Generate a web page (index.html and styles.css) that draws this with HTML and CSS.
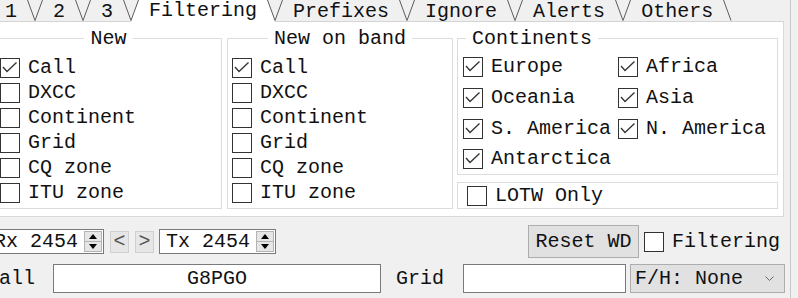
FILE: index.html
```html
<!DOCTYPE html>
<html>
<head>
<meta charset="utf-8">
<title>Filtering</title>
<link rel="stylesheet" href="styles.css">
</head>
<body>
<div class="window">
  <div class="main">

    <!-- tab strip -->
    <div class="tabs">
      <svg class="sep" width="16" height="22" viewBox="0 0 16 22"><path class="v" d="M0.5 0L8 20.5L15.5 0"/><path class="base" d="M0 21.5H16"/></svg>
      <span class="tab">1</span>
      <svg class="sep" width="16" height="22" viewBox="0 0 16 22"><path class="v" d="M0.5 0L8 20.5L15.5 0"/><path class="base" d="M0 21.5H16"/></svg>
      <span class="tab">2</span>
      <svg class="sep" width="16" height="22" viewBox="0 0 16 22"><path class="v" d="M0.5 0L8 20.5L15.5 0"/><path class="base" d="M0 21.5H16"/></svg>
      <span class="tab">3</span>
      <svg class="sep" width="16" height="22" viewBox="0 0 16 22"><path class="fill" d="M8 20.5L15.5 0H16V22H8Z"/><path class="v" d="M0.5 0L8 20.5L15.5 0"/><path class="base" d="M0 21.5H8"/></svg>
      <span class="tab on">Filtering</span>
      <svg class="sep" width="16" height="22" viewBox="0 0 16 22"><path class="fill" d="M0 0H0.5L8 20.5V22H0Z"/><path class="v" d="M0.5 0L8 20.5L15.5 0"/><path class="base" d="M8 21.5H16"/></svg>
      <span class="tab">Prefixes</span>
      <svg class="sep" width="16" height="22" viewBox="0 0 16 22"><path class="v" d="M0.5 0L8 20.5L15.5 0"/><path class="base" d="M0 21.5H16"/></svg>
      <span class="tab">Ignore</span>
      <svg class="sep" width="16" height="22" viewBox="0 0 16 22"><path class="v" d="M0.5 0L8 20.5L15.5 0"/><path class="base" d="M0 21.5H16"/></svg>
      <span class="tab">Alerts</span>
      <svg class="sep" width="16" height="22" viewBox="0 0 16 22"><path class="v" d="M0.5 0L8 20.5L15.5 0"/><path class="base" d="M0 21.5H16"/></svg>
      <span class="tab">Others</span>
      <svg class="sep" width="16" height="22" viewBox="0 0 16 22"><path class="v" d="M0.5 0L8 20.5"/><path class="base" d="M0 21.5H16"/></svg>
      <span class="tabfill"></span>
    </div>

    <!-- filtering page -->
    <div class="panel">
      <fieldset class="group left">
        <legend>New</legend>
        <div class="list">
          <label class="chk"><span class="box"><svg viewBox="0 0 18 18"><path d="M2 8L6 12.5L15.5 3.5"/></svg></span>Call</label>
          <label class="chk"><span class="box"></span>DXCC</label>
          <label class="chk"><span class="box"></span>Continent</label>
          <label class="chk"><span class="box"></span>Grid</label>
          <label class="chk"><span class="box"></span>CQ zone</label>
          <label class="chk"><span class="box"></span>ITU zone</label>
        </div>
      </fieldset>

      <fieldset class="group band">
        <legend>New on band</legend>
        <div class="list">
          <label class="chk"><span class="box"><svg viewBox="0 0 18 18"><path d="M2 8L6 12.5L15.5 3.5"/></svg></span>Call</label>
          <label class="chk"><span class="box"></span>DXCC</label>
          <label class="chk"><span class="box"></span>Continent</label>
          <label class="chk"><span class="box"></span>Grid</label>
          <label class="chk"><span class="box"></span>CQ zone</label>
          <label class="chk"><span class="box"></span>ITU zone</label>
        </div>
      </fieldset>

      <div class="rightcol">
        <fieldset class="group continents">
          <legend>Continents</legend>
          <div class="cgrid">
            <label class="chk"><span class="box"><svg viewBox="0 0 18 18"><path d="M2 8L6 12.5L15.5 3.5"/></svg></span>Europe</label>
            <label class="chk"><span class="box"><svg viewBox="0 0 18 18"><path d="M2 8L6 12.5L15.5 3.5"/></svg></span>Africa</label>
            <label class="chk"><span class="box"><svg viewBox="0 0 18 18"><path d="M2 8L6 12.5L15.5 3.5"/></svg></span>Oceania</label>
            <label class="chk"><span class="box"><svg viewBox="0 0 18 18"><path d="M2 8L6 12.5L15.5 3.5"/></svg></span>Asia</label>
            <label class="chk"><span class="box"><svg viewBox="0 0 18 18"><path d="M2 8L6 12.5L15.5 3.5"/></svg></span>S. America</label>
            <label class="chk"><span class="box"><svg viewBox="0 0 18 18"><path d="M2 8L6 12.5L15.5 3.5"/></svg></span>N. America</label>
            <label class="chk"><span class="box"><svg viewBox="0 0 18 18"><path d="M2 8L6 12.5L15.5 3.5"/></svg></span>Antarctica</label>
          </div>
        </fieldset>
        <div class="frame">
          <label class="chk"><span class="box"></span>LOTW Only</label>
        </div>
      </div>
    </div>

    <!-- bottom controls -->
    <div class="controls">
      <div class="row top">
        <div class="spinbox rx">Rx 2454<span class="spin"><span class="up"></span><span class="dn"></span></span></div>
        <span class="btn nav first">&lt;</span>
        <span class="btn nav">&gt;</span>
        <div class="spinbox tx">Tx 2454<span class="spin"><span class="up"></span><span class="dn"></span></span></div>
        <span class="btn reset">Reset WD</span>
        <label class="chk filt"><span class="box"></span>Filtering</label>
      </div>
      <div class="row bottom">
        <span class="lbl call">Call</span>
        <span class="field callfield">G8PGO</span>
        <span class="lbl grid">Grid</span>
        <span class="field gridfield"></span>
        <span class="combo">F/H: None<svg width="9" height="6" viewBox="0 0 9 6"><path d="M0.5 0.5L4.5 4.5L8.5 0.5"/></svg></span>
      </div>
    </div>

  </div>
  <div class="divider"></div>
  <div class="rest"></div>
</div>
</body>
</html>
```

FILE: styles.css
```css
body {
  margin: 0;
  width: 798px;
  height: 298px;
  overflow: hidden;
  background-color: #f0f0f0;
  color: #111;
  font-family: "Liberation Mono", "Courier New", monospace;
  font-size: 20px;
}

.window {
  display: flex;
  height: 298px;
}

.main {
  width: 790px;
  flex: none;
}

.divider {
  width: 1px;
  background-color: #c9c9c9;
}

.rest {
  flex: 1;
}

/* tabs */
.tabs {
  display: flex;
  width: 805px;
  margin-left: -21px;
}

.tab {
  height: 22px;
  box-sizing: border-box;
  padding: 2px 10px 0;
  line-height: 19px;
  white-space: nowrap;
  border-bottom: 1px solid #d4d4d4;
}

.tab.on {
  padding-top: 0;
  line-height: 21px;
  background-color: #fff;
  border-bottom-color: #fff;
}

.tabfill {
  flex: 1;
  border-bottom: 1px solid #d4d4d4;
}

.sep {
  display: block;
  flex: none;
}

.sep .v {
  fill: none;
  stroke: #5c5c5c;
  stroke-width: 1;
}

.sep .base {
  stroke: #d4d4d4;
  stroke-width: 1;
}

.sep .fill {
  fill: #fff;
}

/* page */
.panel {
  display: flex;
  width: 804px;
  height: 195px;
  box-sizing: border-box;
  margin-left: -20px;
  padding: 4px 5px 7px 14px;
  background-color: #fff;
  border: 1px solid #d9d9d9;
  border-top: 0;
}

.group {
  margin: 0;
  box-sizing: border-box;
  border: 1px solid #dcdcdc;
  min-width: 0;
}

.group legend {
  padding: 0 6px;
  line-height: 25px;
}

.group.left,
.group.band {
  padding: 4px 4px 0;
}

.group.left legend,
.group.band legend {
  margin: 0 auto;
}

.group.left {
  width: 227px;
}

.group.band {
  width: 226px;
  margin-left: 5px;
}

.rightcol {
  display: flex;
  flex-direction: column;
  width: 321px;
  margin-left: 4px;
}

.group.continents {
  padding: 0 4px 1px 5px;
}

.group.continents legend {
  margin-left: 3px;
}

.list {
  display: flex;
  flex-direction: column;
}

.cgrid {
  display: grid;
  grid-template-columns: 155px auto;
  grid-template-rows: 31px 31px 31px 29px;
}

.chk {
  display: flex;
  align-items: center;
  gap: 8px;
  height: 25px;
  white-space: nowrap;
}

.cgrid .chk {
  height: auto;
}

.box {
  display: flex;
  flex: none;
  width: 20px;
  height: 20px;
  box-sizing: border-box;
  border: 1px solid #333;
  background-color: #fff;
}

.box svg {
  width: 18px;
  height: 18px;
  fill: none;
  stroke: #333;
  stroke-width: 1.3;
}

.frame {
  display: flex;
  align-items: center;
  height: 27px;
  box-sizing: border-box;
  margin-top: 7px;
  padding-left: 9px;
  border: 1px solid #dcdcdc;
}

/* controls */
.controls {
  padding-top: 8px;
}

.row {
  display: flex;
  align-items: center;
}

.row.top {
  height: 33px;
  padding-right: 10px;
}

.row.bottom {
  height: 29px;
  margin-top: 6px;
  padding-right: 5px;
}

.spinbox {
  display: flex;
  align-items: center;
  width: 117px;
  height: 25px;
  box-sizing: border-box;
  padding: 1px 1px 1px 6px;
  background-color: #fff;
  border: 1px solid #7a7a7a;
  white-space: pre;
}

.spinbox.rx {
  margin-left: -13px;
}

.spinbox.tx {
  margin-left: 5px;
}

.spin {
  display: flex;
  flex-direction: column;
  width: 18px;
  height: 100%;
  margin-left: auto;
}

.spin span {
  flex: 1;
  display: flex;
  align-items: center;
  justify-content: center;
  background-color: #e6e6e6;
  border: 1px solid #b4b4b4;
}

.spin .up {
  border-bottom: 0;
}

.spin .up::before {
  content: "";
  border-left: 4px solid transparent;
  border-right: 4px solid transparent;
  border-bottom: 5px solid #000;
}

.spin .dn::before {
  content: "";
  border-left: 4px solid transparent;
  border-right: 4px solid transparent;
  border-top: 5px solid #000;
}

.btn {
  display: flex;
  align-items: center;
  justify-content: center;
  box-sizing: border-box;
  background-color: #e1e1e1;
  border: 1px solid #adadad;
}

.btn.nav {
  width: 19px;
  height: 22px;
  margin-left: 6px;
  color: #555;
  background-color: #e6e6e6;
  border-color: #d0d0d0;
}

.btn.reset {
  width: 111px;
  height: 33px;
  margin-left: auto;
}

.chk.filt {
  margin-left: 5px;
}

.lbl.call {
  margin-left: -13px;
}

.lbl.grid {
  margin-left: 15px;
}

.field {
  display: flex;
  align-items: center;
  justify-content: center;
  height: 29px;
  box-sizing: border-box;
  background-color: #fff;
  border: 1px solid #7a7a7a;
}

.callfield {
  width: 328px;
  margin-left: 18px;
}

.gridfield {
  width: 163px;
  margin-left: 19px;
}

.combo {
  display: flex;
  align-items: center;
  justify-content: space-between;
  width: 155px;
  height: 29px;
  box-sizing: border-box;
  margin-left: 4px;
  padding: 0 10px 0 4px;
  background-color: #e1e1e1;
  border: 1px solid #adadad;
}

.combo svg {
  fill: none;
  stroke: #666;
  stroke-width: 1;
}
```
